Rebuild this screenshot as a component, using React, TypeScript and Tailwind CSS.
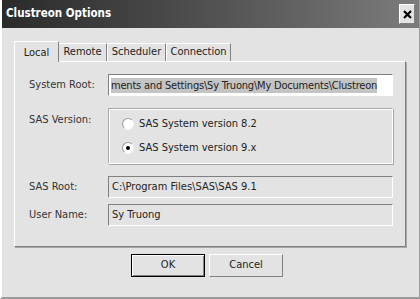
import React from "react";

const font = { fontFamily: "Tahoma, 'DejaVu Sans Condensed', 'Liberation Sans', sans-serif" };

function Field({ value, disabled, selected }: { value: string; disabled?: boolean; selected?: boolean }) {
  return (
    <div
      className={`flex-1 min-w-0 h-[22px] flex items-center overflow-hidden whitespace-nowrap border border-t-[#808080] border-l-[#808080] border-r-white border-b-white ${
        disabled ? "bg-[#e3e3e3]" : "bg-white"
      }`}
    >
      {selected ? (
        <span className="ml-[2px] bg-[#c4c4c4] text-[#222] leading-[15px] tracking-[-0.2px]">{value}</span>
      ) : (
        <span className="pl-[3px] text-[#222]">{value}</span>
      )}
    </div>
  );
}

function Radio({ label, checked }: { label: string; checked?: boolean }) {
  return (
    <div className="flex items-center gap-[5px]">
      <div className="w-[12px] h-[12px] rounded-full bg-white border border-[#9a9a9a] border-b-[#f4f4f4] border-r-[#f4f4f4] flex items-center justify-center">
        {checked && <div className="w-[4px] h-[4px] rounded-full bg-black" />}
      </div>
      <span className="text-[#222]">{label}</span>
    </div>
  );
}

export default function App() {
  return (
    <div className="w-[420px] h-[299px] bg-[#e3e3e3] text-[11px] flex flex-col border-l-2 border-l-white border-b-2 border-b-[#9a9a9a] border-r border-r-[#9a9a9a] overflow-hidden" style={font}>
      {/* title bar */}
      <div className="h-[28px] shrink-0 flex items-center justify-between pl-[4px] pr-[4px] bg-gradient-to-r from-[#2a2a2a] to-[#7c7c7c] -ml-[2px]">
        <span className="text-white font-bold text-[11.5px] pl-[2px]">Clustreon Options</span>
        <div className="w-[16px] h-[20px] bg-[#e3e3e3] border border-t-white border-l-white border-r-[#808080] border-b-[#808080] flex items-center justify-center">
          <svg width="9" height="9" viewBox="0 0 9 9">
            <path d="M1 1L8 8M8 1L1 8" stroke="black" strokeWidth="2.2" />
          </svg>
        </div>
      </div>

      <div className="flex flex-col pl-[12px] pr-[13px] pt-[13px]">
        {/* tabs */}
        <div className="flex items-end h-[20px] text-[#222]">
          <div className="h-[21px] w-[45px] -mb-[1px] z-10 bg-[#e3e3e3] border-t border-l border-white border-r border-r-[#808080] flex items-start justify-center pt-[3px]">
            Local
          </div>
          <div className="h-[18px] w-[48px] border-t border-white border-r border-r-[#808080] flex items-center justify-center">
            Remote
          </div>
          <div className="h-[18px] w-[59px] border-t border-l border-white border-r border-r-[#808080] flex items-center justify-center">
            Scheduler
          </div>
          <div className="h-[18px] w-[65px] border-t border-l border-white border-r border-r-[#808080] flex items-center justify-center">
            Connection
          </div>
        </div>

        {/* panel */}
        <div className="h-[186px] border border-t-white border-l-white border-r-[#808080] border-b-[#808080] shadow-[1px_1px_0_#a8a8a8] flex flex-col pl-[14px] pr-[12px] pt-[12px] text-[#333]">
          <div className="flex items-center">
            <span className="w-[79px] shrink-0">System Root:</span>
            <Field value="ments and Settings\Sy Truong\My Documents\Clustreon" selected />
          </div>

          <div className="flex mt-[12px]">
            <span className="w-[79px] shrink-0 pt-[4px]">SAS Version:</span>
            <div className="flex-1 h-[56px] border border-t-[#a8a8a8] border-l-[#a8a8a8] border-r-white border-b-white shadow-[inset_1px_1px_0_white,1px_1px_0_#a8a8a8] flex flex-col justify-center gap-[7px] pl-[13px]">
              <Radio label="SAS System version 8.2" />
              <Radio label="SAS System version 9.x" checked />
            </div>
          </div>

          <div className="flex items-center mt-[12px]">
            <span className="w-[79px] shrink-0">SAS Root:</span>
            <Field value="C:\Program Files\SAS\SAS 9.1" disabled />
          </div>

          <div className="flex items-center mt-[6px]">
            <span className="w-[79px] shrink-0">User Name:</span>
            <Field value="Sy Truong" disabled />
          </div>
        </div>

        {/* buttons */}
        <div className="flex gap-[4px] pl-[117px] mt-[7px] text-[#222]">
          <button className="w-[74px] h-[23px] bg-[#e3e3e3] border border-black shadow-[inset_1px_1px_0_white,inset_-1px_-1px_0_#808080]">
            OK
          </button>
          <button className="w-[74px] h-[23px] bg-[#e3e3e3] border border-t-white border-l-white border-r-[#808080] border-b-[#808080]">
            Cancel
          </button>
        </div>
      </div>
    </div>
  );
}
